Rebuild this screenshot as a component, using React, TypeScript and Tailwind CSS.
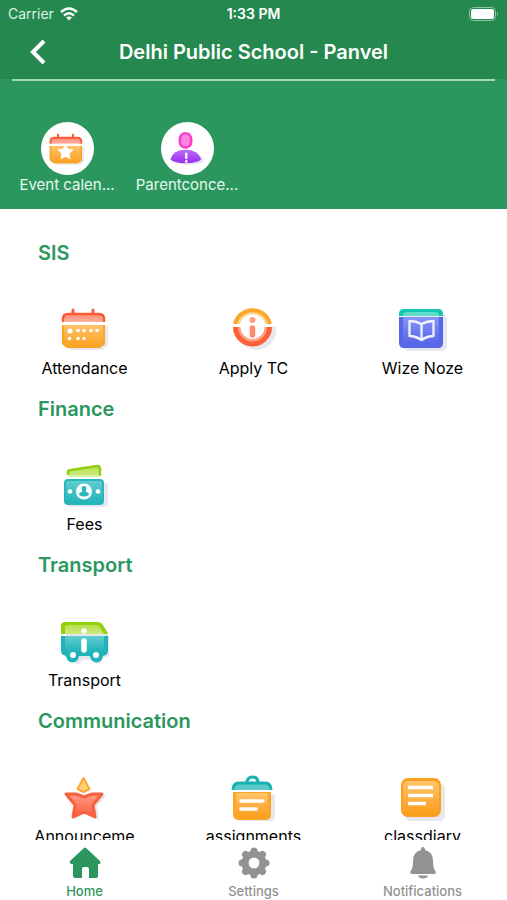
import type { ReactNode } from "react"

const shadow = "#e6e7ef"

function Gradients() {
  return (
    <svg width="0" height="0" className="absolute" aria-hidden="true">
      <defs>
        <linearGradient id="orange" x1="0" y1="0" x2="0" y2="1">
          <stop offset="0" stopColor="#ffc36a" />
          <stop offset="1" stopColor="#fb9f1c" />
        </linearGradient>
        <linearGradient id="red" x1="0" y1="0" x2="0" y2="1">
          <stop offset="0" stopColor="#ff8a70" />
          <stop offset="1" stopColor="#ffb3a2" />
        </linearGradient>
        <linearGradient id="star" x1="0" y1="0" x2="0" y2="1">
          <stop offset="0" stopColor="#ff9c86" />
          <stop offset="1" stopColor="#fb5a3a" />
        </linearGradient>
        <linearGradient id="blue" x1="0" y1="0" x2="0" y2="1">
          <stop offset="0" stopColor="#8694f7" />
          <stop offset="1" stopColor="#5765e8" />
        </linearGradient>
        <linearGradient id="teal" x1="0" y1="0" x2="0" y2="1">
          <stop offset="0" stopColor="#62cdd0" />
          <stop offset="1" stopColor="#1fb3b8" />
        </linearGradient>
        <linearGradient id="lime" x1="0" y1="0" x2="0" y2="1">
          <stop offset="0" stopColor="#b9e04c" />
          <stop offset="1" stopColor="#cbea7c" />
        </linearGradient>
        <linearGradient id="purple" x1="0" y1="0" x2="0" y2="1">
          <stop offset="0" stopColor="#bd6cf8" />
          <stop offset="1" stopColor="#9b2cf0" />
        </linearGradient>
      </defs>
    </svg>
  )
}

function Icon({ children, className = "size-12" }: { children: ReactNode; className?: string }) {
  return (
    <svg viewBox="0 0 48 48" fill="none" className={className} aria-hidden="true">
      {children}
    </svg>
  )
}

function CalendarBase() {
  return (
    <>
      <path d="M5 21h42v19l-5 5H10l-5-5z" fill={shadow} />
      <path d="M12 5v5M32 5v5" stroke="#f4623f" strokeWidth="3" strokeLinecap="round" />
      <path d="M2 17v-3q0-5 5-5h31q5 0 5 5v3z" fill="url(#red)" />
      <path d="M2 17v-3q0-5 5-5h31q5 0 5 5v3" stroke="#f85b36" strokeWidth="2.5" />
      <path d="M1 20h43v19l-5 4H6l-5-4z" fill="url(#orange)" />
      <path d="M2 20v18l5 4h31l5-4V20" stroke="#fba425" strokeWidth="2" />
    </>
  )
}

function AttendanceIcon() {
  return (
    <Icon>
      <CalendarBase />
      <g fill="#fff">
        <circle cx="9" cy="26" r="2.6" />
        <circle cx="17" cy="25.5" r="1.8" />
        <circle cx="23" cy="25.5" r="1.8" />
        <circle cx="30" cy="25.5" r="1.8" />
        <circle cx="36" cy="25.5" r="1.8" />
        <circle cx="8.5" cy="33.5" r="1.8" />
        <circle cx="17" cy="33.5" r="1.8" />
        <circle cx="23" cy="33.5" r="1.8" />
      </g>
    </Icon>
  )
}

function EventIcon() {
  return (
    <Icon className="h-9 w-9">
      <CalendarBase />
      <path d="M22 18l3 6 7 1-5 5 1 7-6-3-6 3 1-7-5-5 7-1z" fill="#fff" stroke="#fff" strokeWidth="1" strokeLinejoin="round" />
    </Icon>
  )
}

function ParentIcon() {
  return (
    <Icon className="h-9 w-9">
      <path d="M8 41q3-12 19-12 18 0 20 12-7 4-20 4-12 0-19-4z" fill={shadow} />
      <rect x="14.5" y="3" width="15" height="19" rx="7.5" fill="#ff86e0" stroke="#fa3fd0" strokeWidth="3.5" />
      <path d="M2 38Q5 25 22 25t21 13q-6 5-21 5T2 38z" fill="url(#purple)" />
      <path d="M23 30v6" stroke="#fff" strokeWidth="3" strokeLinecap="round" />
      <circle cx="23" cy="40.5" r="1.7" fill="#fff" />
    </Icon>
  )
}

function ApplyIcon() {
  return (
    <Icon>
      <path d="M9 35a20 20 0 0 0 37-13l-4-1-4 14-13 7z" fill={shadow} />
      <path d="M8 19a15 15 0 0 1 29 0" stroke="#ffd796" strokeWidth="3" />
      <path d="M5 19a18 18 0 0 1 35 0" stroke="#f8a82a" strokeWidth="4" />
      <path d="M9 22a13.5 13.500 0 0 0 27 0" stroke="#ff9f86" strokeWidth="3" />
      <path d="M5.500 22a17 17 0 1 0 34 0" stroke="#fb6038" strokeWidth="5" />
      <circle cx="22.5" cy="15" r="3" fill="#ff9d86" />
      <path d="M22.5 23v7" stroke="#ff8a72" strokeWidth="5.5" strokeLinecap="round" />
    </Icon>
  )
}

function WizeIcon() {
  return (
    <Icon>
      <rect x="4" y="9" width="44" height="37" rx="5" fill={shadow} />
      <path d="M0 11V9q0-5 5-5h34q5 0 5 5v2z" fill="#14c6ae" />
      <path d="M4 11q0-4 4-4h28q4 0 4 4z" fill="#5fdcca" />
      <path d="M0 12h44v26q0 5-5 5H5q-5 0-5-5z" fill="#5766e8" />
      <path d="M4 12h36v25q0 2-2 2H6q-2 0-2-2z" fill="url(#blue)" />
      <path d="M22.5 19Q17 16 10.500 16v15q6 0 12 4 6-4 12-4V16Q28 16 22.500 19zv16" stroke="#f0f2ff" strokeWidth="2.3" strokeLinejoin="round" />
    </Icon>
  )
}

function FeesIcon() {
  return (
    <Icon>
      <rect x="7" y="22" width="40" height="24" rx="3" fill={shadow} />
      <path d="M7 14v-3q0-2 3-2l26-4q3 0 3 3v7" fill="url(#lime)" stroke="#91cf12" strokeWidth="2.5" />
      <path d="M8 15h30" stroke="#d9efa4" strokeWidth="2" />
      <rect x="4" y="19" width="38" height="24" rx="3" fill="url(#teal)" stroke="#25b6ba" strokeWidth="2" />
      <circle cx="23" cy="30.5" r="8" fill="#fff" />
      <circle cx="9" cy="30.5" r="2.3" fill="#fff" />
      <circle cx="37" cy="30.5" r="2.3" fill="#fff" />
      <path d="M23 25a2.500 2.500 0 0 1 2 4v2q3 0 3 3-5 3-10 0 0-3 3-3v-2a2.500 2.500 0 0 1 2-4z" fill="#2fb8bc" />
    </Icon>
  )
}

function BusIcon() {
  return (
    <Icon>
      <path d="M5 14l40-3 4 10v18l-7 2q-4 10-10 2H21q-4 8-10 0l-6-4z" fill={shadow} />
      <path d="M0 17V9q0-4 4-4h33q3 0 5 3l5 9z" fill="#93d10c" />
      <path d="M4 17v-6q0-3 3-3h28q3 0 4 3l4 6z" fill="url(#lime)" />
      <path d="M0 19h47v15q0 4-5 5a6.500 6.500 0 0 1-13 0H18a6.500 6.500 0 0 1-13 0q-5-1-5-5z" fill="#20b4b9" />
      <path d="M4 19h39v13q0 3-3 3H7q-3 0-3-3z" fill="url(#teal)" />
      <circle cx="23" cy="14" r="2.8" fill="#fff" />
      <path d="M23 24v9" stroke="#fff" strokeWidth="5.5" strokeLinecap="round" />
      <circle cx="12" cy="38" r="3" fill="#fff" />
      <circle cx="35" cy="38" r="3" fill="#fff" />
    </Icon>
  )
}

function StarIcon() {
  return (
    <Icon>
      <path d="M46 22L36 33l2 14-13-6-12 6-1-6 29-19z" fill={shadow} />
      <path d="M22.5 5l6 11-6 3-6-3z" fill="#ffcf78" stroke="#f9a93a" strokeWidth="2" strokeLinejoin="round" />
      <path d="M5 21h10l8 3 8-3h10l-9 11 2 12-11-5-11 5 2-12z" fill="url(#star)" stroke="#f9603e" strokeWidth="3" strokeLinejoin="round" />
    </Icon>
  )
}

function ClipboardIcon() {
  return (
    <Icon>
      <path d="M7 22h38v22q0 5-6 5H13q-6 0-6-6z" fill={shadow} />
      <path d="M17 10q0-6 5.500-6t5.500 6" stroke="#18b3b0" strokeWidth="3" />
      <path d="M3 17q0-7 6-7h26q6 0 6 7z" fill="#5bcac8" />
      <path d="M3 17q0-7 6-7h26q6 0 6 7" stroke="#18b3b0" strokeWidth="3" />
      <path d="M3 19h38v22q0 6-6 6H9q-6 0-6-6z" fill="#fba425" />
      <path d="M6 20h32v19q0 5-5 5H11q-5 0-5-5z" fill="url(#orange)" />
      <path d="M11 28h22M11 36h15" stroke="#fff" strokeWidth="3.5" strokeLinecap="round" />
    </Icon>
  )
}

function DiaryIcon() {
  return (
    <Icon>
      <rect x="6" y="11" width="40" height="37" rx="5" fill={shadow} />
      <rect x="2" y="5" width="40" height="39" rx="7" fill="#fb9f1f" />
      <rect x="4" y="8" width="36" height="33" rx="5" fill="url(#orange)" />
      <path d="M9 14.500h25M9 22.500h25M9 30.500h18" stroke="#fff" strokeWidth="3.5" />
    </Icon>
  )
}

function HomeIcon() {
  return (
    <svg viewBox="0 0 32 32" className="size-8" fill="currentColor" aria-hidden="true">
      <path d="M15 1q1-1 2 0l14 13q1 2 0 3h-2v12q0 2-2 2h-7v-9q0-2-2-2h-3q-2 0-2 2v9H6q-2 0-2-2V17H2q-2-1-1-3z" />
    </svg>
  )
}

function GearIcon() {
  return (
    <svg viewBox="0 0 32 32" className="size-8" fill="none" stroke="currentColor" aria-hidden="true">
      <circle cx="16" cy="16" r="9" strokeWidth="7" />
      <g strokeWidth="7" strokeLinecap="round">
        <path d="M16 4v3M16 25v3M4 16h3M25 16h3M7.500 7.500l2 2M22.500 22.500l2 2M24.500 7.500l-2 2M9.500 22.500l-2 2" />
      </g>
    </svg>
  )
}

function BellIcon() {
  return (
    <svg viewBox="0 0 32 32" className="size-8" fill="currentColor" aria-hidden="true">
      <path d="M16 0q2 0 2 3 8 2 8 11 0 8 3 11 0 2-2 2H5q-2 0-2-2 3-3 3-11 0-9 8-11 0-3 2-3zM11 28.500h10q-1 3-5 3t-5-3z" />
    </svg>
  )
}

const shortcuts = [
  { label: "Event calen...", icon: <EventIcon /> },
  { label: "Parentconce...", icon: <ParentIcon /> },
]

const sections = [
  {
    title: "SIS",
    items: [
      { label: "Attendance", icon: <AttendanceIcon /> },
      { label: "Apply TC", icon: <ApplyIcon /> },
      { label: "Wize Noze", icon: <WizeIcon /> },
    ],
  },
  { title: "Finance", items: [{ label: "Fees", icon: <FeesIcon /> }] },
  { title: "Transport", items: [{ label: "Transport", icon: <BusIcon /> }] },
  {
    title: "Communication",
    items: [
      { label: "Announceme", icon: <StarIcon /> },
      { label: "assignments", icon: <ClipboardIcon /> },
      { label: "classdiary", icon: <DiaryIcon /> },
    ],
  },
]

const tabs = [
  { label: "Home", icon: <HomeIcon />, active: true },
  { label: "Settings", icon: <GearIcon />, active: false },
  { label: "Notifications", icon: <BellIcon />, active: false },
]

function StatusBar() {
  return (
    <div className="grid h-7 grid-cols-3 items-center px-2 text-sm">
      <div className="flex items-center gap-1.5 text-[#d9f3e2]">
        <span>Carrier</span>
        <svg viewBox="0 0 18 14" className="h-3.5 w-[18px]" fill="none" stroke="#fff" strokeWidth="2.4" aria-hidden="true">
          <path d="M1 5q8-7 16 0M4 8.500q5-4.500 10 0" />
          <path d="M9 13.500l-3-3q3-2 6 0z" fill="#fff" stroke="none" />
        </svg>
      </div>
      <span className="text-center text-sm font-semibold">1:33 PM</span>
      <svg viewBox="0 0 30 14" className="h-3.5 w-[30px] justify-self-end" aria-hidden="true">
        <rect x="0.5" y="0.5" width="26" height="13" rx="4" fill="none" stroke="#8fc5a5" />
        <rect x="2" y="2" width="23" height="10" rx="2.5" fill="#fff" />
        <path d="M28 5q2 2 0 4z" fill="#8fc5a5" />
      </svg>
    </div>
  )
}

export default function App() {
  return (
    <div className="flex h-screen flex-col bg-white font-['Inter',sans-serif] text-black">
      <Gradients />
      <header className="shrink-0 bg-[#2b975f] text-white">
        <div className="bg-[#25884f]">
          <StatusBar />
          <div className="grid h-[51px] grid-cols-[76px_1fr_76px] items-center pb-1">
            <button type="button" aria-label="Back" className="flex h-full items-center justify-center">
              <svg viewBox="0 0 16 26" className="h-[26px] w-4" fill="none" stroke="#fff" strokeWidth="4" aria-hidden="true">
                <path d="M14 2L3 13l11 11" />
              </svg>
            </button>
            <h1 className="text-center text-xl font-semibold whitespace-nowrap">Delhi Public School - Panvel</h1>
          </div>
        </div>
        <div className="mx-3 h-0.5 bg-[#a3d8b9]" />
        <div className="flex h-32 px-[7px] pt-[41px]">
          {shortcuts.map((item) => (
            <button key={item.label} type="button" className="flex w-30 flex-col items-center">
              <span className="flex size-[53px] items-center justify-center rounded-full bg-white">{item.icon}</span>
              <span className="text-[15px] leading-5 whitespace-nowrap text-[#e6f7ec]">{item.label}</span>
            </button>
          ))}
        </div>
      </header>

      <main className="min-h-0 flex-1 overflow-hidden pt-[30px]">
        {sections.map((section) => (
          <section key={section.title} className="pb-[15px]">
            <h2 className="px-[38px] text-xl leading-7 font-semibold text-[#2b975f]">{section.title}</h2>
            <div className="grid grid-cols-3 pt-[38px]">
              {section.items.map((item) => (
                <button key={item.label} type="button" className="flex flex-col items-center gap-[3px]">
                  {item.icon}
                  <span className="text-base leading-6">{item.label}</span>
                </button>
              ))}
            </div>
          </section>
        ))}
      </main>

      <nav className="grid h-[60px] shrink-0 grid-cols-3 bg-white pt-[7px]">
        {tabs.map((tab) => (
          <button
            key={tab.label}
            type="button"
            aria-current={tab.active ? "page" : undefined}
            className={tab.active ? "flex flex-col items-center gap-1 text-[#2b975f]" : "flex flex-col items-center gap-1 text-[#929292]"}
          >
            {tab.icon}
            <span className="text-[13px] leading-4 font-medium">{tab.label}</span>
          </button>
        ))}
      </nav>
    </div>
  )
}
